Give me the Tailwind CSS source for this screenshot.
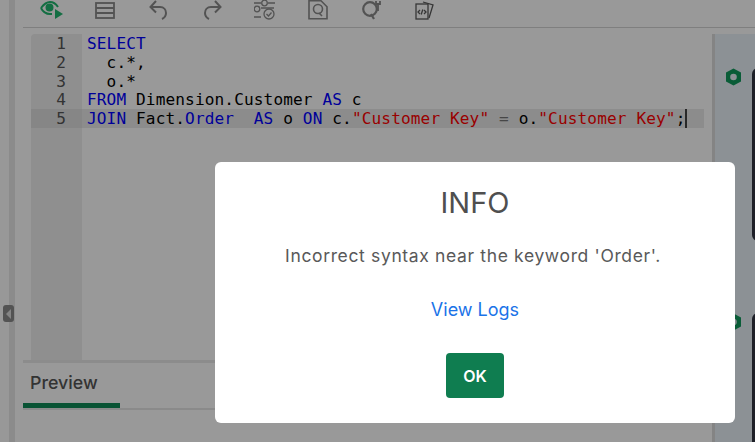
<!DOCTYPE html>
<html lang="en">
<head>
  <meta charset="UTF-8">
  <title>Query Editor</title>
  <script src="https://cdn.jsdelivr.net/npm/@tailwindcss/browser@4"></script>
</head>
<body class="bg-white h-[442px] w-[755px] overflow-hidden relative font-['Inter','Open_Sans',sans-serif]">

  <div class="flex h-[442px]">
    <!-- left rail -->
    <div class="w-[23px] shrink-0 flex">
      <div class="w-[9px] bg-[#fdfdfd]"></div>
      <div class="w-[6px] bg-[#e8e8e8]"></div>
      <div class="w-[8px] bg-white"></div>
    </div>

    <!-- main column -->
    <div class="flex-1 flex flex-col min-w-0">
      <div class="h-[28px] border-b border-[#d4d4d4] flex items-start shrink-0">
        <div class="flex items-start gap-[33px] pl-[17px]">
          <svg class="w-[23px] h-[20px]" viewBox="0 0 23 20" fill="none" stroke="#22b870" stroke-width="2"><path d="M1 8c3-4 6-6 9-6s6 2 8 5M1 8c2 4 5 6 9 6h2"/><circle cx="9.500" cy="7.500" r="3" fill="#22b870"/><path d="M15 9l8 5-8 5z" fill="#22b870" stroke="none"/></svg>
          <svg class="w-[20px] h-[17px] mt-[2px] -ml-[1px]" viewBox="0 0 20 17" fill="none" stroke="#8a8a8a" stroke-width="1.800"><rect x="1" y="1" width="18" height="15"/><path d="M1 6h18M1 11h18"/></svg>
          <svg class="w-[20px] h-[20px] ml-[1px]" viewBox="0 0 20 20" fill="none" stroke="#8a8a8a" stroke-width="2"><path d="M7 1L1.500 7l5.500 5.500"/><path d="M2 7h9c4 0 6 3 6 6 0 3-2 5-4 6"/></svg>
          <svg class="w-[20px] h-[20px]" viewBox="0 0 20 20" fill="none" stroke="#8a8a8a" stroke-width="2"><path d="M13 1l5.500 6L13 12.500"/><path d="M18 7H9c-4 0-6 3-6 6 0 3 2 5 4 6"/></svg>
          <svg class="w-[21px] h-[20px] -ml-[1px]" viewBox="0 0 21 20" fill="none" stroke="#8a8a8a" stroke-width="1.300"><path d="M0 3h7M14 3h7M7 8h13M7 17H0"/><circle cx="10.500" cy="3" r="2.800"/><circle cx="3" cy="9" r="2.800"/><circle cx="15" cy="14" r="5"/><path d="M12.500 14l2 2 3-3.500"/></svg>
          <svg class="w-[20px] h-[20px]" viewBox="0 0 20 20" fill="none" stroke="#8a8a8a" stroke-width="1.600"><path d="M1 0.800h12l6 6v12H1z"/><circle cx="10" cy="9" r="4.500"/><path d="M11 13l3 3"/></svg>
          <svg class="w-[20px] h-[20px] ml-[1px]" viewBox="0 0 20 20" fill="none" stroke="#8a8a8a" stroke-width="2.200"><circle cx="8" cy="9" r="6.800"/><path d="M9 14l3 5"/><path d="M16 11V5M14 1v3h4V1" stroke-width="1.800"/></svg>
          <svg class="w-[20px] h-[20px]" viewBox="0 0 20 20" fill="none" stroke="#5a5a5a" stroke-width="1.300"><path d="M8 2l10 3-4 13"/><rect x="1" y="4" width="12" height="15" fill="#fff"/><path d="M5 10l-2 2 2 2M9 10l2 2-2 2M7.800 9.500l-1.600 5"/></svg>
        </div>
      </div>

      <div class="flex flex-1 min-h-0">
        <!-- editor and preview -->
        <div class="flex-1 flex flex-col min-w-0 relative">
          <div class="h-[335px] pt-[6px] border-b-[3px] border-[#eaeaea] shrink-0">
            <div class="ml-[8px] flex h-[326px] font-['DejaVu_Sans_Mono',monospace] text-[16.100px] leading-[18.750px] tracking-[0.120px]">
              <div class="w-[51px] bg-[#eeeeee] text-[#555] text-right rounded-tl-sm shrink-0">
                <div class="h-[18.750px] pt-[1px] pr-[16px]">1</div>
                <div class="h-[18.750px] pt-[1px] pr-[16px]">2</div>
                <div class="h-[18.750px] pt-[1px] pr-[16px]">3</div>
                <div class="h-[18.750px] pt-[1px] pr-[16px]">4</div>
                <div class="h-[18.750px] pt-[1px] pr-[16px] bg-[#dfdfdf]">5</div>
              </div>
              <div class="flex-1 text-black">
                <div class="h-[18.750px] pt-[1px] whitespace-pre pl-[5px] text-[#0000ff]">SELECT</div>
                <div class="h-[18.750px] pt-[1px] whitespace-pre pl-[5px]">  c.*,</div>
                <div class="h-[18.750px] pt-[1px] whitespace-pre pl-[5px]">  o.*</div>
                <div class="h-[18.750px] pt-[1px] whitespace-pre pl-[5px]"><span class="text-[#0000ff]">FROM</span> Dimension.Customer <span class="text-[#0000ff]">AS</span> c</div>
                <div class="h-[18.750px] pt-[1px] whitespace-pre pl-[5px] bg-[#eaeaea] w-[622px]"><span class="text-[#0000ff]">JOIN</span> Fact.<span class="text-[#0000ff]">Order</span>  <span class="text-[#0000ff]">AS</span> o <span class="text-[#0000ff]">ON</span> c.<span class="text-[#ff0000]">"Customer Key"</span> <span class="text-[#777]">=</span> o.<span class="text-[#ff0000]">"Customer Key"</span>;<span class="border-l-2 border-[#444]"></span></div>
              </div>
            </div>
          </div>
          <div class="h-[47px] border-b-[2px] border-[#e6e6e6] shrink-0 flex">
            <div class="w-[97px] h-[45px] border-b-[5px] border-[#0f8a58] pl-[7px] pt-[8px] text-[17.800px] leading-[24px] text-[#555] font-medium">Preview</div>
          </div>
        </div>

        <!-- right panel -->
        <div class="w-[43px] shrink-0 ml-[8px] mt-[6px] border-l-[3px] border-[#dcdcdc] bg-[#e9f2f8] relative overflow-hidden">
          <svg class="absolute left-[10px] top-[34px] w-[17px] h-[18px]" viewBox="0 0 17 18"><path d="M8.500 0.500l7.500 4v9l-7.500 4-7.500-4v-9z" fill="#0f9a5c"/><circle cx="8.500" cy="9" r="3.300" fill="#e9f2f8"/></svg>
          <div class="absolute left-[37px] top-[34px] w-[10px] h-[173px] bg-[#333644] rounded-l-md"></div>
          <svg class="absolute left-[10px] top-[279px] w-[17px] h-[18px]" viewBox="0 0 17 18"><path d="M8.500 0.500l7.500 4v9l-7.500 4-7.500-4v-9z" fill="#0f9a5c"/><circle cx="8.500" cy="9" r="3.300" fill="#e9f2f8"/></svg>
          <div class="absolute left-[37px] top-[279px] w-[10px] h-[140px] bg-[#333644] rounded-tl-md"></div>
        </div>
      </div>
    </div>
  </div>

  <!-- collapse handle -->
  <div class="absolute left-[3px] top-[305px] w-[11px] h-[17px] bg-[#8a8a8a] rounded-[3px] flex items-center justify-center">
    <div class="w-0 h-0 border-y-[5px] border-y-transparent border-r-[5px] border-r-[#ddd]"></div>
  </div>

  <!-- modal -->
  <div class="absolute inset-0 bg-black/40 pl-[215px] pt-[162px]">
    <div class="w-[520px] h-[261px] bg-white rounded-[6px] flex flex-col items-center">
      <div class="mt-[19px] text-[29px] leading-[44px] text-[#4f4f4f]">INFO</div>
      <div class="mt-[18px] mr-[4px] text-[17.500px] leading-[26px] tracking-[0.640px] text-[#595959]">Incorrect syntax near the keyword 'Order'.</div>
      <a href="#" class="mt-[28px] text-[18px] leading-[26px] text-[#1a73e8]">View Logs</a>
      <button class="mt-[30px] w-[58px] h-[45px] bg-[#0f7d50] rounded-[4px] text-white text-[16px] font-semibold">OK</button>
    </div>
  </div>

</body>
</html>
